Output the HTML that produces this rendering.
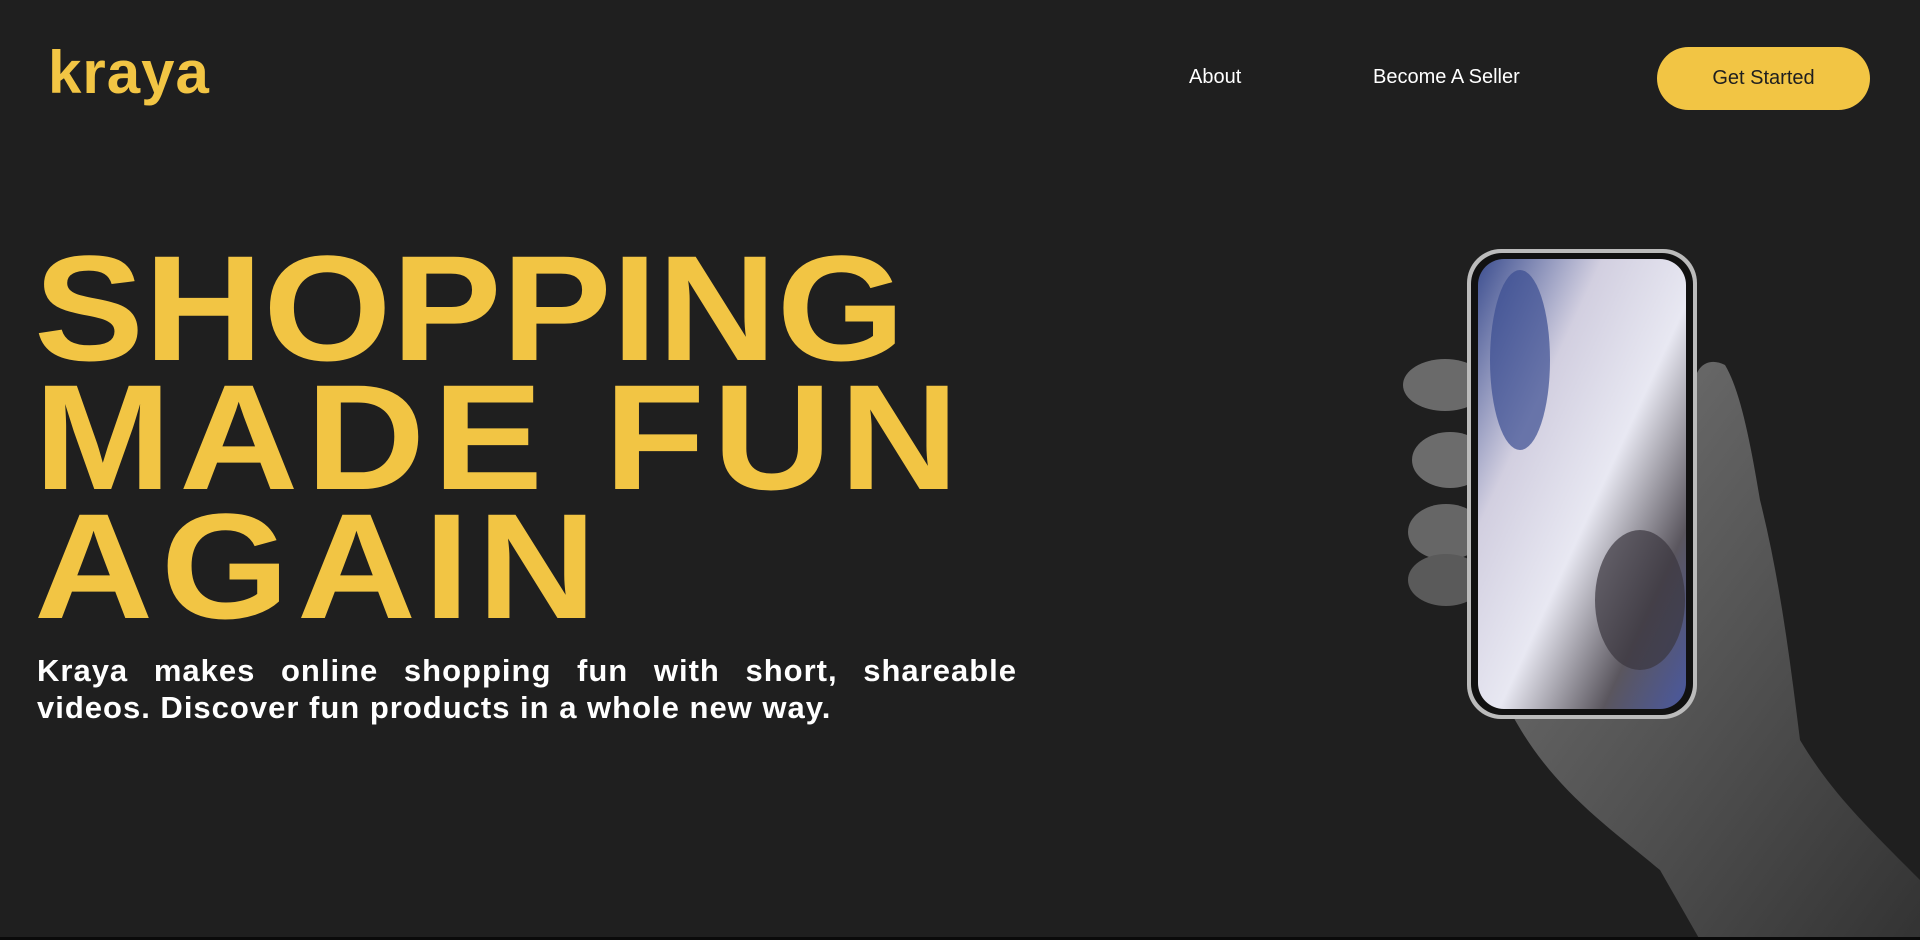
<!DOCTYPE html>
<html><head><meta charset="utf-8"><style>
html,body{margin:0;padding:0;}
body{width:1920px;height:940px;background:#1f1f1f;overflow:hidden;position:relative;font-family:"Liberation Sans",sans-serif;}
.logo{position:absolute;left:48px;top:38px;font-size:60px;font-weight:bold;color:#f2c544;letter-spacing:1px;}
.nav{position:absolute;top:66px;color:#fff;font-size:20px;}
.btn{position:absolute;left:1657px;top:47px;width:213px;height:63px;border-radius:32px;background:#f2c544;color:#1f1f1f;font-size:20px;text-align:center;line-height:63px;}
h1{position:absolute;left:34px;top:244px;margin:0;font-size:150px;line-height:129px;color:#f2c544;font-weight:bold;transform:scaleX(1.1);transform-origin:0 0;}
h1 span{display:block;white-space:nowrap;}
p{position:absolute;left:37px;top:652px;width:980px;margin:0;color:#fff;font-weight:bold;font-size:31px;line-height:37px;letter-spacing:1px;}
p span{display:block;white-space:nowrap;}
p span.j{text-align:justify;text-align-last:justify;white-space:normal;}
.bot{position:absolute;left:0;top:937px;width:1920px;height:3px;background:#0a0a0a;}
</style></head><body>
<div class="logo">kraya</div>
<div class="nav" style="left:1189px">About</div>
<div class="nav" style="left:1373px">Become A Seller</div>
<div class="btn">Get Started</div>
<h1><span style="letter-spacing:0px">SHOPPING</span><span style="letter-spacing:7px">MADE FUN</span><span style="letter-spacing:7px">AGAIN</span></h1>
<p><span class="j">Kraya makes online shopping fun with short, shareable</span><span>videos. Discover fun products in a whole new way.</span></p>
<svg style="position:absolute;left:0;top:0" width="1920" height="940">
<defs>
<linearGradient id="skin" x1="0" y1="0" x2="1" y2="1"><stop offset="0" stop-color="#777"/><stop offset=".5" stop-color="#555"/><stop offset="1" stop-color="#333"/></linearGradient>
<linearGradient id="scr" x1="0" y1="0" x2="1" y2="1"><stop offset="0" stop-color="#3d4f90"/><stop offset=".3" stop-color="#d2cfe0"/><stop offset=".55" stop-color="#e8e8f2"/><stop offset=".8" stop-color="#5a565e"/><stop offset="1" stop-color="#4a58a0"/></linearGradient>
</defs>
<path d="M1500 690 C1540 780 1600 820 1660 870 L1700 940 L1920 940 L1920 880 C1860 820 1830 790 1800 740 C1790 660 1780 580 1760 500 C1750 440 1740 390 1725 365 C1705 355 1690 370 1695 400 L1695 690 Z" fill="url(#skin)"/>
<ellipse cx="1445" cy="385" rx="42" ry="26" fill="#6a6a6a"/>
<ellipse cx="1450" cy="460" rx="38" ry="28" fill="#6c6c6c"/>
<ellipse cx="1446" cy="532" rx="38" ry="28" fill="#666"/>
<ellipse cx="1446" cy="580" rx="38" ry="26" fill="#5a5a5a"/>
<rect x="1467" y="249" width="230" height="470" rx="34" fill="#bbb"/>
<rect x="1471" y="253" width="222" height="462" rx="31" fill="#111"/>
<rect x="1478" y="259" width="208" height="450" rx="26" fill="url(#scr)"/>
<ellipse cx="1520" cy="360" rx="30" ry="90" fill="#3b4d92" opacity=".7"/>
<ellipse cx="1640" cy="600" rx="45" ry="70" fill="#3a363e" opacity=".7"/>
</svg>
<div class="bot"></div>
</body></html>
